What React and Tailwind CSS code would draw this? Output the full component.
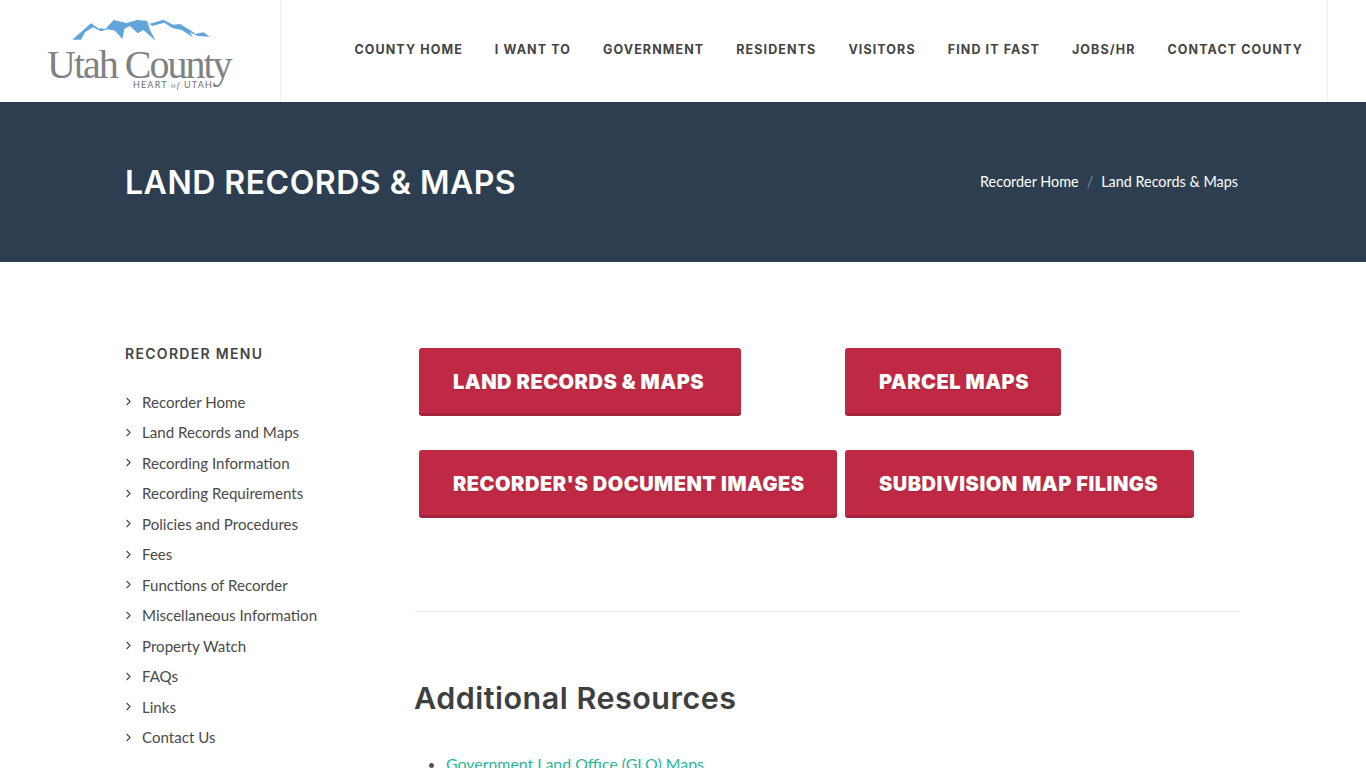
import React from 'react';
import { FiChevronRight } from 'react-icons/fi';

const navItems = ['COUNTY HOME', 'I WANT TO', 'GOVERNMENT', 'RESIDENTS', 'VISITORS', 'FIND IT FAST', 'JOBS/HR', 'CONTACT COUNTY'];

const menuItems = [
  'Recorder Home',
  'Land Records and Maps',
  'Recording Information',
  'Recording Requirements',
  'Policies and Procedures',
  'Fees',
  'Functions of Recorder',
  'Miscellaneous Information',
  'Property Watch',
  'FAQs',
  'Links',
  'Contact Us',
];

const Logo = () => (
  <div className="flex flex-col w-[186px]">
    <svg width="150" height="30" viewBox="0 0 450 90" className="ml-[18px]">
      <path
        fill="#62a5da"
        d="M22 77 L78 28 L103 45 L108 42 L120 46 L146 18 L185 27 L215 18 L245 20 L252 30 L295 17 L325 32 L345 30 L370 45 L392 60 L415 55 L435 68 L398 66 L375 55 L384 70 L350 48 L322 42 L298 26 L262 36 L248 26 L255 48 L272 80 L235 48 L218 58 L195 36 L178 44 L172 75 L150 50 L128 46 L108 52 L100 48 L84 40 L60 55 L48 77 Z"
      />
    </svg>
    <span className="mt-[3px] font-['Liberation_Serif',serif] text-[40px] leading-[36px] tracking-[-2px] text-[#808184] whitespace-nowrap">
      Utah County
    </span>
    <span className="self-end mr-[20px] mt-[-3px] font-['Lato',sans-serif] text-[9px] leading-[10px] tracking-[1.2px] text-[#6f7072] whitespace-nowrap">
      HEART <i className="font-['Liberation_Serif',serif]">of</i> UTAH
    </span>
  </div>
);

const RedButton = ({ label, width }) => (
  <a className={`${width} h-[68px] flex items-center pl-[34px] pt-[2px] bg-[#bf2943] border-b-[3px] border-[#a3233a] rounded-[3px] text-white font-['Inter',sans-serif] font-black text-[20px] tracking-[0.5px] whitespace-nowrap [text-shadow:0_1px_1px_rgba(0,0,0,0.15)]`}>
    {label}
  </a>
);

const App = () => {
  return (
    <div className="h-[768px] overflow-hidden bg-white font-['Lato',sans-serif] text-[#444]">
      <header className="h-[102px] flex">
        <div className="w-[281px] border-r border-[#eeeeee] pl-[47px] pt-[14px] shrink-0">
          <Logo />
        </div>
        <div className="w-[1047px] border-r border-[#eeeeee] flex items-start justify-end pr-[24px] pt-[42px] gap-[32px]">
          {navItems.map((item) => (
            <a key={item} className="font-['Inter',sans-serif] font-bold text-[12.5px] leading-[16px] tracking-[1.1px] text-[#444] whitespace-nowrap">
              {item}
            </a>
          ))}
        </div>
      </header>

      <section className="h-[160px] bg-[#2c3e50] pl-[125px] pr-[128px] flex items-center justify-between">
        <h1 className="pt-[2px] font-['Inter',sans-serif] font-semibold text-[32px] tracking-[0.5px] text-white">LAND RECORDS &amp; MAPS</h1>
        <div className="flex items-center text-[14.4px] text-white">
          <span>Recorder Home</span>
          <span className="mx-[8px] text-[#7f8c99]">/</span>
          <span>Land Records &amp; Maps</span>
        </div>
      </section>

      <div className="flex pl-[125px] pr-[126px] pt-[86px]">
        <aside className="w-[289px] shrink-0">
          <h5 className="font-['Inter',sans-serif] font-semibold text-[14px] leading-[12px] tracking-[1.3px] text-[#444]">RECORDER MENU</h5>
          <ul className="mt-[26.6px]">
            {menuItems.map((item) => (
              <li key={item} className="h-[30.5px] flex items-center text-[15.1px] text-[#4a4a4a]">
                <FiChevronRight className="w-[13px] h-[13px] ml-[-3px] mr-[7px] shrink-0" />
                {item}
              </li>
            ))}
          </ul>
        </aside>

        <main className="flex-1">
          <div className="grid grid-cols-[426px_auto] gap-y-[34px] justify-items-start pl-[5px]">
            <RedButton label="LAND RECORDS & MAPS" width="w-[322px]" />
            <RedButton label="PARCEL MAPS" width="w-[216px]" />
            <RedButton label="RECORDER'S DOCUMENT IMAGES" width="w-[418px]" />
            <RedButton label="SUBDIVISION MAP FILINGS" width="w-[349px]" />
          </div>
          <hr className="mt-[93px] border-[#eeeeee]" />
          <h2 className="mt-[66px] font-['Inter',sans-serif] font-semibold text-[30.5px] leading-[40px] tracking-[0.5px] text-[#3f3f3f]">Additional Resources</h2>
          <ul className="mt-[32px] pl-[32px] list-disc marker:text-[#555] text-[15.9px] leading-[28px]">
            <li>
              <a className="text-[#2bb597]">Government Land Office (GLO) Maps</a>
            </li>
          </ul>
        </main>
      </div>
    </div>
  );
};

export default App;
